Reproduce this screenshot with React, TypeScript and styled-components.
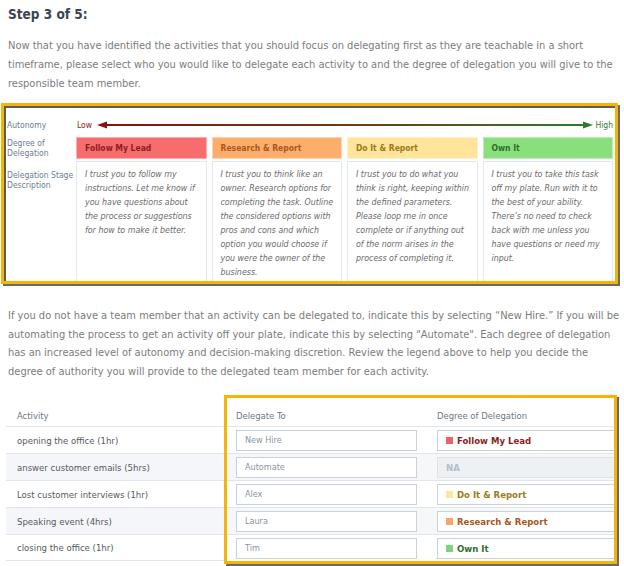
import React, { FC } from "react";
import styled, { createGlobalStyle } from "styled-components";

type Tone = "red" | "orange" | "yellow" | "green";

const tones: Record<Tone, { bg: string; fg: string; chip: string }> = {
  red: { bg: "#f76c6c", fg: "#8c1e22", chip: "#ef5f68" },
  orange: { bg: "#fdae6c", fg: "#a9581d", chip: "#f9a46c" },
  yellow: { bg: "#fee59b", fg: "#9b7c16", chip: "#fde79e" },
  green: { bg: "#8bde7c", fg: "#2b6e2b", chip: "#7bd57a" },
};

// descriptions are kept as the lines the legend prints them in
const stages: { title: string; tone: Tone; lines: string[] }[] = [
  {
    title: "Follow My Lead",
    tone: "red",
    lines: [
      "I trust you to follow my",
      "instructions. Let me know if",
      "you have questions about",
      "the process or suggestions",
      "for how to make it better.",
    ],
  },
  {
    title: "Research & Report",
    tone: "orange",
    lines: [
      "I trust you to think like an",
      "owner. Research options for",
      "completing the task. Outline",
      "the considered options with",
      "pros and cons and which",
      "option you would choose if",
      "you were the owner of the",
      "business.",
    ],
  },
  {
    title: "Do It & Report",
    tone: "yellow",
    lines: [
      "I trust you to do what you",
      "think is right, keeping within",
      "the defined parameters.",
      "Please loop me in once",
      "complete or if anything out",
      "of the norm arises in the",
      "process of completing it.",
    ],
  },
  {
    title: "Own It",
    tone: "green",
    lines: [
      "I trust you to take this task",
      "off my plate. Run with it to",
      "the best of your ability.",
      "There\u2019s no need to check",
      "back with me unless you",
      "have questions or need my",
      "input.",
    ],
  },
];

const activities: { name: string; person: string; degree: Tone | null }[] = [
  { name: "opening the office (1hr)", person: "New Hire", degree: "red" },
  { name: "answer customer emails (5hrs)", person: "Automate", degree: null },
  { name: "Lost customer interviews (1hr)", person: "Alex", degree: "yellow" },
  { name: "Speaking event (4hrs)", person: "Laura", degree: "orange" },
  { name: "closing the office (1hr)", person: "Tim", degree: "green" },
];

const degreeLabel: Record<Tone, string> = {
  red: "Follow My Lead",
  orange: "Research & Report",
  yellow: "Do It & Report",
  green: "Own It",
};

const GlobalStyle = createGlobalStyle`
  html, body {
    margin: 0;
    padding: 0;
    background: #fff;
    overflow: hidden;
  }
  body {
    font-family: "DejaVu Sans Condensed", "Open Sans", sans-serif;
  }
`;

const Page = styled.div`
  width: 624px;
  height: 566px;
  overflow: hidden;
`;

const StepTitle = styled.h2`
  margin: 0;
  padding: 7px 8px 0;
  font-size: 13.5px;
  line-height: 15px;
  font-weight: 700;
  color: #3b4550;
`;

const Copy = styled.p<{ $top: number; $lh: number }>`
  margin: ${(p) => p.$top}px 0 0;
  padding: 0 8px;
  width: 612px;
  font-size: 11px;
  line-height: ${(p) => p.$lh}px;
  color: #7c7c7c;
`;

// yellow highlight frame with the dark bevel line
const Highlight = styled.div`
  box-sizing: border-box;
  border: 3px solid #f4b506;
  box-shadow: 2px 2px 0 #6a6a6a, inset 2px 2px 0 #5c5c5c;
  background: #fff;
`;

const Legend = styled(Highlight)`
  margin: 10px 0 0 1px;
  width: 617px;
  height: 181px;
  padding: 12px 2px 0 3px;
  display: grid;
  grid-template-columns: 64px repeat(4, 1fr);
  grid-template-rows: 14px 27px 1fr;
  column-gap: 5px;
`;

const RowLabel = styled.div<{ $pad?: number }>`
  align-self: ${(p) => (p.$pad === undefined ? "end" : "start")};
  padding-top: ${(p) => p.$pad ?? 0}px;
  font-size: 8.5px;
  line-height: 10px;
  color: #6d7d92;
  white-space: nowrap;
  min-height: ${(p) => (p.$pad === undefined ? "22px" : "0")};
  display: flex;
  align-items: center;
`;

const Scale = styled.div`
  grid-column: 2 / -1;
  display: flex;
  align-items: center;
  padding-left: 1px;
  font-size: 8.5px;
`;

const ScaleEnd = styled.span<{ $color: string }>`
  color: ${(p) => p.$color};
`;

const ScaleLine = styled.div`
  flex: 1;
  height: 1.5px;
  background: linear-gradient(90deg, #8b1111, #6e3a17 50%, #2f7a2f);
`;

const ArrowHead = styled.svg`
  flex: none;
  display: block;
`;

const StageHead = styled.div<{ $tone: Tone }>`
  align-self: end;
  box-sizing: border-box;
  height: 22px;
  padding: 0 8px;
  display: flex;
  align-items: center;
  background: ${(p) => tones[p.$tone].bg};
  color: ${(p) => tones[p.$tone].fg};
  border: 1px solid rgba(255, 255, 255, 0.45);
  font-size: 8.5px;
  font-weight: 700;
`;

const StageText = styled.div`
  margin-top: 2px;
  padding: 5px 7px 0 8px;
  border: 1px solid #e2e8ef;
  border-bottom: none;
  font-size: 8.8px;
  line-height: 14px;
  font-style: italic;
  color: #6b6b6b;
  white-space: nowrap;
  overflow: hidden;
`;

const TableArea = styled.div`
  display: flex;
  align-items: flex-start;
  margin: 14px 0 0 6px;
`;

const ActivityCol = styled.div`
  width: 218px;
  padding-top: 5px;
`;

const HeadCell = styled.div`
  box-sizing: border-box;
  height: 26px;
  padding: 4px 0 0 11px;
  display: flex;
  align-items: center;
  font-size: 9.4px;
  color: #6b7783;
`;

const ActivityRow = styled.div<{ $striped: boolean }>`
  box-sizing: border-box;
  height: 27px;
  padding-left: 11px;
  display: flex;
  align-items: center;
  border-top: 1px solid #e2e6eb;
  background: ${(p) => (p.$striped ? "#f4f6f9" : "#fff")};
  font-size: 9.5px;
  color: #555b61;

  &:last-child {
    border-bottom: 1px solid #e2e6eb;
  }
`;

const DelegateFrame = styled(Highlight)`
  width: 393px;
  overflow: hidden;
`;

const FrameRow = styled.div<{ $head?: boolean; $striped?: boolean }>`
  box-sizing: border-box;
  height: ${(p) => (p.$head ? 28 : 27)}px;
  padding: ${(p) => (p.$head ? "6px 0 0 9px" : "0 0 0 9px")};
  display: grid;
  grid-template-columns: 181px 190px;
  column-gap: 20px;
  align-items: center;
  border-top: ${(p) => (p.$head ? "none" : "1px solid #e2e6eb")};
  background: ${(p) => (p.$striped ? "#f6f7f9" : "#fff")};
  font-size: 9.4px;
  color: #6b7783;
`;

const Field = styled.div`
  box-sizing: border-box;
  height: 21px;
  padding-left: 8px;
  display: flex;
  align-items: center;
  border: 1px solid #c9d1da;
  background: #fff;
  color: #8a95a1;
  font-size: 9px;
`;

const Picker = styled(Field)<{ $tone: Tone | null }>`
  gap: 4px;
  background: ${(p) => (p.$tone ? "#fff" : "#eef1f4")};
  border-color: ${(p) => (p.$tone ? "#c9d1da" : "#dfe4ea")};
  color: ${(p) => (p.$tone ? tones[p.$tone].fg : "#b4bec8")};
  font-weight: 700;
  font-size: 9.5px;
`;

const Swatch = styled.span<{ $tone: Tone }>`
  width: 7px;
  height: 7px;
  background: ${(p) => tones[p.$tone].chip};
`;

const App: FC = () => {
  return (
    <Page>
      <GlobalStyle />
      <StepTitle>Step 3 of 5:</StepTitle>
      <Copy $top={14} $lh={19}>
        Now that you have identified the activities that you should focus on
        delegating first as they are teachable in a short timeframe, please
        select who you would like to delegate each activity to and the degree
        of delegation you will give to the responsible team member.
      </Copy>

      <Legend>
        <RowLabel $pad={2}>Autonomy</RowLabel>
        <Scale>
          <ScaleEnd $color="#8b2424">Low</ScaleEnd>
          <ArrowHead width="10" height="8" viewBox="0 0 10 8" style={{ marginLeft: 5 }}>
            <polygon points="0,4 10,0.5 10,7.5" fill="#8b1111" />
          </ArrowHead>
          <ScaleLine />
          <ArrowHead width="10" height="8" viewBox="0 0 10 8" style={{ marginRight: 2 }}>
            <polygon points="10,4 0,0.5 0,7.5" fill="#2f7a2f" />
          </ArrowHead>
          <ScaleEnd $color="#2f7d32">High</ScaleEnd>
        </Scale>

        <RowLabel>
          Degree of
          <br />
          Delegation
        </RowLabel>
        {stages.map((s) => (
          <StageHead key={s.title} $tone={s.tone}>
            {s.title}
          </StageHead>
        ))}

        <RowLabel $pad={11}>
          Delegation Stage
          <br />
          Description
        </RowLabel>
        {stages.map((s) => (
          <StageText key={s.title}>
            {s.lines.map((line, idx) => (
              <div key={idx}>{line}</div>
            ))}
          </StageText>
        ))}
      </Legend>

      <Copy $top={23} $lh={18.5}>
        If you do not have a team member that an activity can be delegated to,
        indicate this by selecting “New Hire.” If you will be automating the
        process to get an activity off your plate, indicate this by selecting
        "Automate". Each degree of delegation has an increased level of autonomy
        and decision-making discretion. Review the legend above to help you
        decide the degree of authority you will provide to the delegated team
        member for each activity.
      </Copy>

      <TableArea>
        <ActivityCol>
          <HeadCell>Activity</HeadCell>
          {activities.map((a, idx) => (
            <ActivityRow key={a.name} $striped={idx % 2 === 1}>
              {a.name}
            </ActivityRow>
          ))}
        </ActivityCol>

        <DelegateFrame>
          <FrameRow $head>
            <span>Delegate To</span>
            <span>Degree of Delegation</span>
          </FrameRow>
          {activities.map((a, idx) => (
            <FrameRow key={a.name} $striped={idx % 2 === 1}>
              <Field>{a.person}</Field>
              <Picker $tone={a.degree}>
                {a.degree ? (
                  <>
                    <Swatch $tone={a.degree} />
                    {degreeLabel[a.degree]}
                  </>
                ) : (
                  "NA"
                )}
              </Picker>
            </FrameRow>
          ))}
        </DelegateFrame>
      </TableArea>
    </Page>
  );
};

export default App;
